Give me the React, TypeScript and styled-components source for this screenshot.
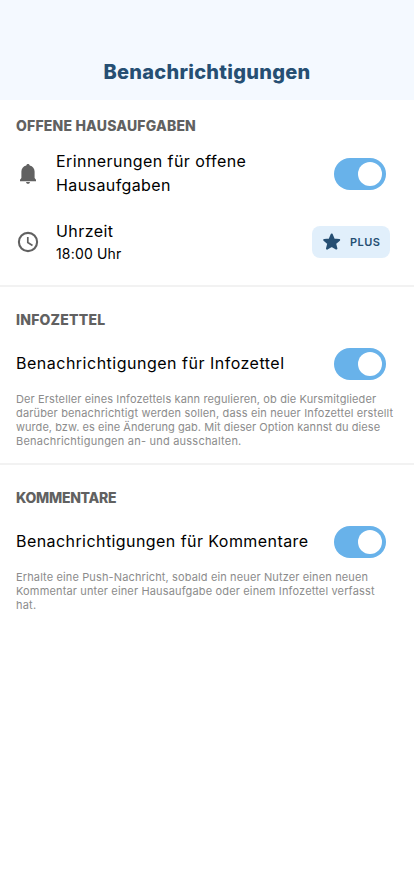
import React from "react";
import styled, { createGlobalStyle } from "styled-components";

const GlobalStyle = createGlobalStyle`
  * { box-sizing: border-box; }
  body {
    margin: 0;
    background: #ffffff;
    font-family: Inter, Roboto, sans-serif;
    color: #000000;
  }
`;

const Screen = styled.main`
  min-height: 896px;
  background: #ffffff;
`;

const Header = styled.header`
  display: flex;
  align-items: flex-end;
  justify-content: center;
  height: 100px;
  padding-bottom: 16px;
  background: #f4f9ff;
`;

const Title = styled.h1`
  margin: 0;
  font-size: 20px;
  line-height: 24px;
  font-weight: 800;
  letter-spacing: 0.28px;
  color: #264f73;
`;

const Section = styled.section<{ $top: number; $height: number }>`
  height: ${(p) => p.$height}px;
  padding: ${(p) => p.$top}px 16px 0;

  & + & {
    border-top: 2px solid #f2f2f2;
  }
`;

const SectionTitle = styled.h2<{ $tracking: number }>`
  margin: 0;
  font-size: 14px;
  line-height: 16px;
  font-weight: 800;
  letter-spacing: ${(p) => p.$tracking}px;
  color: #616161;
`;

const Row = styled.div<{ $gap: number; $height: number }>`
  display: flex;
  align-items: center;
  height: ${(p) => p.$height}px;
  margin-top: ${(p) => p.$gap}px;
  padding-right: 12px;
`;

const BadgeRow = styled(Row)`
  padding-right: 8px;
`;

const IconSlot = styled.span`
  display: flex;
  width: 40px;
  flex: none;
  color: #616161;
`;

const Texts = styled.div`
  flex: 1;
  padding-bottom: 2px;
`;

const Line = styled.div<{ $tracking: number }>`
  font-size: 16px;
  line-height: 24px;
  letter-spacing: ${(p) => p.$tracking}px;
  white-space: nowrap;
`;

const Time = styled.div`
  margin-bottom: -2px;
  font-size: 14px;
  line-height: 22px;
  letter-spacing: 0.17px;
`;

const Track = styled.button`
  display: flex;
  align-items: center;
  justify-content: flex-end;
  flex: none;
  width: 52px;
  height: 32px;
  padding: 4px;
  border: 0;
  border-radius: 16px;
  background: #68b2ea;
`;

const Knob = styled.span`
  width: 24px;
  height: 24px;
  border-radius: 50%;
  background: #ffffff;
`;

const PlusBadge = styled.span`
  display: flex;
  align-items: center;
  flex: none;
  gap: 8px;
  width: 78px;
  height: 32px;
  padding-left: 10px;
  border-radius: 8px;
  background: #e1effb;
  color: #264f73;
  font-size: 11px;
  font-weight: 600;
  letter-spacing: 0.45px;
`;

const Description = styled.p`
  margin: 12px 0 0;
  font-size: 11px;
  line-height: 14px;
  color: #8c8c8c;
`;

const DescriptionLine = styled.span<{ $tracking: number }>`
  display: block;
  white-space: nowrap;
  letter-spacing: ${(p) => p.$tracking}px;
`;

const BellIcon = () => (
  <svg width="24" height="24" viewBox="0 0 24 24" fill="currentColor">
    <path d="M12 2c-.9 0-1.5.6-1.7 1.4C7.2 4.1 5.4 6.6 5.4 9.6V16L4 17.8v1.4h16v-1.4L18.6 16V9.6c0-3-1.8-5.5-4.9-6.2C13.5 2.6 12.9 2 12 2zM10 20.1a2 1.8 0 0 0 4 0z" />
  </svg>
);

const ClockIcon = () => (
  <svg width="24" height="24" viewBox="0 0 24 24" fill="none" stroke="currentColor">
    <circle cx="12" cy="12" r="9.1" strokeWidth="2.1" />
    <path d="M11.8 7v5.6l4.7 2.8" strokeWidth="1.7" />
  </svg>
);

const StarIcon = () => (
  <svg width="20" height="20" viewBox="0 0 20 20" fill="currentColor" stroke="currentColor" strokeWidth="2" strokeLinejoin="round">
    <path d="m9.7 2.5 2.1 4.9 5.4.5-4.1 3.5 1.3 5.2-4.7-2.8L5 16.6l1.3-5.2-4.1-3.5 5.4-.5z" />
  </svg>
);

const Toggle = ({ label }: { label: string }) => (
  <Track type="button" role="switch" aria-checked="true" aria-label={label}>
    <Knob />
  </Track>
);

type TextLine = [text: string, tracking: number];

const Info = ({ lines }: { lines: TextLine[] }) => (
  <Description>
    {lines.map(([text, tracking]) => (
      <DescriptionLine key={text} $tracking={tracking}>{text}</DescriptionLine>
    ))}
  </Description>
);

const infoSheetText: TextLine[] = [
  ["Der Ersteller eines Infozettels kann regulieren, ob die Kursmitglieder", 0.12],
  ["darüber benachrichtigt werden sollen, dass ein neuer Infozettel erstellt", 0.15],
  ["wurde, bzw. es eine Änderung gab. Mit dieser Option kannst du diese", 0.05],
  ["Benachrichtigungen an- und ausschalten.", 0.22],
];

const commentText: TextLine[] = [
  ["Erhalte eine Push-Nachricht, sobald ein neuer Nutzer einen neuen", 0.13],
  ["Kommentar unter einer Hausaufgabe oder einem Infozettel verfasst", 0.15],
  ["hat.", 0.2],
];

export default function App() {
  return (
    <>
      <GlobalStyle />
      <Screen>
        <Header>
          <Title>Benachrichtigungen</Title>
        </Header>

        <Section $top={18} $height={185}>
          <SectionTitle $tracking={0.19}>OFFENE HAUSAUFGABEN</SectionTitle>
          <Row $gap={16} $height={48}>
            <IconSlot><BellIcon /></IconSlot>
            <Texts>
              <Line $tracking={0.43}>Erinnerungen für offene</Line>
              <Line $tracking={0.4}>Hausaufgaben</Line>
            </Texts>
            <Toggle label="Erinnerungen für offene Hausaufgaben" />
          </Row>
          <BadgeRow $gap={20} $height={48}>
            <IconSlot><ClockIcon /></IconSlot>
            <Texts>
              <Line $tracking={0.42}>Uhrzeit</Line>
              <Time>18:00 Uhr</Time>
            </Texts>
            <PlusBadge><StarIcon />PLUS</PlusBadge>
          </BadgeRow>
        </Section>

        <Section $top={25} $height={178}>
          <SectionTitle $tracking={0.22}>INFOZETTEL</SectionTitle>
          <Row $gap={20} $height={32}>
            <Texts><Line $tracking={0.5}>Benachrichtigungen für Infozettel</Line></Texts>
            <Toggle label="Benachrichtigungen für Infozettel" />
          </Row>
          <Info lines={infoSheetText} />
        </Section>

        <Section $top={25} $height={178}>
          <SectionTitle $tracking={-0.27}>KOMMENTARE</SectionTitle>
          <Row $gap={20} $height={32}>
            <Texts><Line $tracking={0.43}>Benachrichtigungen für Kommentare</Line></Texts>
            <Toggle label="Benachrichtigungen für Kommentare" />
          </Row>
          <Info lines={commentText} />
        </Section>
      </Screen>
    </>
  );
}
